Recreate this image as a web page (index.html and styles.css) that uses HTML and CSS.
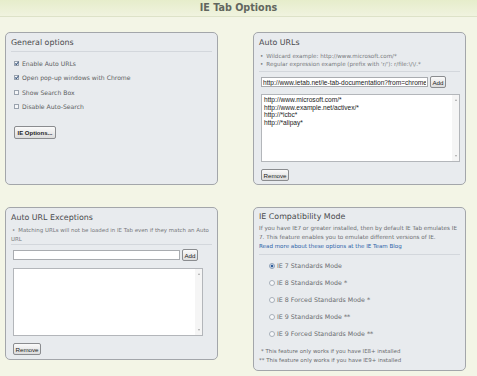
FILE: index.html
```html
<!DOCTYPE html>
<html>
<head>
    <meta charset="utf-8">
    <title>IE Tab Options</title>
    <link rel="stylesheet" href="styles.css">
</head>
<body>
    <div class="page_title">IE Tab Options</div>

    <div class="columns">
        <!-- general options -->
        <section class="panel">
            <div class="panel_head">
                <h2>General options</h2>
            </div>
            <div class="checks">
                <label class="check_row"><span class="box checked"></span>Enable Auto URLs</label>
                <label class="check_row"><span class="box checked"></span>Open pop-up windows with Chrome</label>
                <label class="check_row"><span class="box"></span>Show Search Box</label>
                <label class="check_row"><span class="box"></span>Disable Auto-Search</label>
            </div>
            <button class="bouton ie_options">IE Options...</button>
        </section>

        <!-- auto urls -->
        <section class="panel">
            <div class="panel_head">
                <h2>Auto URLs</h2>
                <ul class="notes">
                    <li>Wildcard example: http://www.microsoft.com/*</li>
                    <li>Regular expression example (prefix with 'r/'): r/file:\/\/.*</li>
                </ul>
            </div>
            <div class="add_row">
                <input class="champ" type="text" value="http://www.ietab.net/ie-tab-documentation?from=chromeurl">
                <button class="bouton">Add</button>
            </div>
            <div class="liste large">
                <div class="liste_items">
                    <div>http://www.microsoft.com/*</div>
                    <div>http://www.example.net/activex/*</div>
                    <div>http://*icbc*</div>
                    <div>http://*alipay*</div>
                </div>
                <div class="scroll"><span class="fleche_haut"></span><span class="fleche_bas"></span></div>
            </div>
            <button class="bouton remove">Remove</button>
        </section>

        <!-- exceptions -->
        <section class="panel">
            <div class="panel_head head_serre">
                <h2>Auto URL Exceptions</h2>
                <ul class="notes wide">
                    <li>Matching URLs will not be loaded in IE Tab even if they match an Auto URL</li>
                </ul>
            </div>
            <div class="add_row">
                <input class="champ" type="text" value="">
                <button class="bouton">Add</button>
            </div>
            <div class="liste">
                <div class="liste_items"></div>
                <div class="scroll"><span class="fleche_haut"></span><span class="fleche_bas"></span></div>
            </div>
            <button class="bouton remove">Remove</button>
        </section>

        <!-- compatibility mode -->
        <section class="panel panel_tall">
            <div class="panel_head">
                <h2>IE Compatibility Mode</h2>
                <p class="texte">If you have IE7 or greater installed, then by default IE Tab emulates IE 7. This feature enables you to emulate different versions of IE.</p>
                <a class="lien" href="#">Read more about these options at the IE Team Blog</a>
            </div>
            <div class="radios">
                <label class="radio_row"><span class="rond selected"></span>IE 7 Standards Mode</label>
                <label class="radio_row"><span class="rond"></span>IE 8 Standards Mode *</label>
                <label class="radio_row"><span class="rond"></span>IE 8 Forced Standards Mode *</label>
                <label class="radio_row"><span class="rond"></span>IE 9 Standards Mode **</label>
                <label class="radio_row"><span class="rond"></span>IE 9 Forced Standards Mode **</label>
            </div>
            <div class="footnotes">
                <div class="note1">* This feature only works if you have IE8+ installed</div>
                <div>** This feature only works if you have IE9+ installed</div>
            </div>
        </section>
    </div>
</body>
</html>
```

FILE: styles.css
```css
body {
    margin: 0;
    background-color: #f3f5e6;
    font-family: "DejaVu Sans", sans-serif;
    color: #666;
}
.page_title {
    height: 16px;
    line-height: 16px;
    border-bottom: 1px solid #dde2c8;
    background: linear-gradient(#e6edcb, #f0f3df);
    text-align: center;
    font-weight: bold;
    font-size: 9.6px;
    color: #62665e;
}
.columns {
    display: grid;
    grid-template-columns: 213px 213px;
    column-gap: 35px;
    row-gap: 22px;
    align-items: start;
    padding: 15px 0 0 5px;
}
.panel {
    box-sizing: border-box;
    height: 153px;
    border: 1px solid #a3a6aa;
    border-radius: 5px;
    background-color: #e8ebee;
    padding: 5px 5px 0 5px;
}
.panel_tall {
    height: 164px;
    padding-top: 4px;
}
.panel_head {
    border-bottom: 1px solid #d3d7dc;
    padding-bottom: 3px;
}
.head_serre {
    padding-bottom: 0;
}
h2 {
    margin: 0;
    font-size: 7.9px;
    font-weight: normal;
    line-height: 10px;
    color: #484a4d;
}
.notes {
    list-style: none;
    margin: 4px 0 0 0;
    padding: 0;
    font-size: 5.6px;
    line-height: 8px;
    color: #77797c;
}
.notes li::before {
    content: "\2022";
    margin: 0 3px 0 1px;
}
.notes.wide {
    font-size: 5.45px;
    line-height: 9px;
    margin-top: 3px;
}
.checks {
    padding-top: 4px;
}
.check_row {
    display: flex;
    align-items: center;
    height: 14.5px;
    font-size: 6.1px;
    color: #5d5f62;
}
.box {
    box-sizing: border-box;
    width: 5px;
    height: 5px;
    margin: 0 3px 0 3px;
    border: 1px solid #9aa3ae;
    background-color: #f5f6f8;
    position: relative;
}
.box.checked::after {
    content: "";
    position: absolute;
    left: 1px;
    top: -1px;
    width: 1px;
    height: 3px;
    border: solid #3d5a80;
    border-width: 0 1px 1px 0;
    transform: rotate(40deg);
}
.bouton {
    box-sizing: border-box;
    height: 12px;
    padding: 0 2px;
    border: 1px solid #8a8c8f;
    border-radius: 2px;
    background: linear-gradient(#fafafa, #dcdcdc);
    font-family: "Liberation Sans", Arial, sans-serif;
    font-size: 6.2px;
    color: #222;
}
.ie_options {
    height: 13px;
    width: 42px;
    margin: 12px 0 0 3px;
    font-weight: bold;
    font-size: 6px;
}
.add_row {
    display: flex;
    align-items: center;
    gap: 2px;
    margin: 4px 0 0 2px;
}
.champ {
    box-sizing: border-box;
    width: 167px;
    height: 10px;
    margin: 0;
    padding: 0 1px;
    border: 1px solid #a9acb0;
    background-color: #fff;
    font-family: "Liberation Sans", Arial, sans-serif;
    font-size: 6.6px;
    color: #222;
}
.add_row .bouton {
    width: 16px;
    padding: 0;
}
.liste {
    box-sizing: border-box;
    display: flex;
    width: 190px;
    height: 68px;
    margin: 7px 0 0 2px;
    border: 1px solid #b3b6ba;
    background-color: #fff;
}
.liste.large {
    width: 199px;
    margin-top: 6px;
}
.liste_items {
    flex: 1;
    padding: 1px 2px;
    font-family: "Liberation Sans", Arial, sans-serif;
    font-size: 6.6px;
    line-height: 7.7px;
    color: #222;
}
.scroll {
    width: 7px;
    display: flex;
    flex-direction: column;
    justify-content: space-between;
    align-items: center;
    padding: 4px 0;
    background-color: #f5f5f5;
}
.fleche_haut, .fleche_bas {
    width: 0;
    height: 0;
    border-left: 1.5px solid transparent;
    border-right: 1.5px solid transparent;
}
.fleche_haut {
    border-bottom: 2px solid #a7a7a7;
}
.fleche_bas {
    border-top: 2px solid #a7a7a7;
}
.remove {
    width: 28px;
    height: 12px;
    margin: 7px 0 0 2px;
    padding: 0;
}
.texte {
    margin: 2px 0 0 0;
    font-size: 5.65px;
    line-height: 9px;
    color: #6a6c6f;
}
.lien {
    display: block;
    font-size: 5.55px;
    line-height: 9px;
    color: #2b62a8;
    text-decoration: none;
}
.radios {
    padding: 2px 0 0 10px;
}
.radio_row {
    display: flex;
    align-items: center;
    height: 17px;
    font-size: 6.3px;
    color: #6a6c6f;
}
.rond {
    box-sizing: border-box;
    width: 6px;
    height: 6px;
    margin-right: 2px;
    border: 1px solid #a7afb9;
    border-radius: 50%;
    background-color: #f7f8fa;
}
.rond.selected {
    border-color: #8ea0b8;
    background: radial-gradient(circle, #2f5e9c 0 1.5px, #dfe7f1 1.6px);
}
.footnotes {
    margin-top: 5px;
    font-size: 5.45px;
    line-height: 9px;
    color: #6a6c6f;
}
.note1 {
    padding-left: 2px;
}
```
